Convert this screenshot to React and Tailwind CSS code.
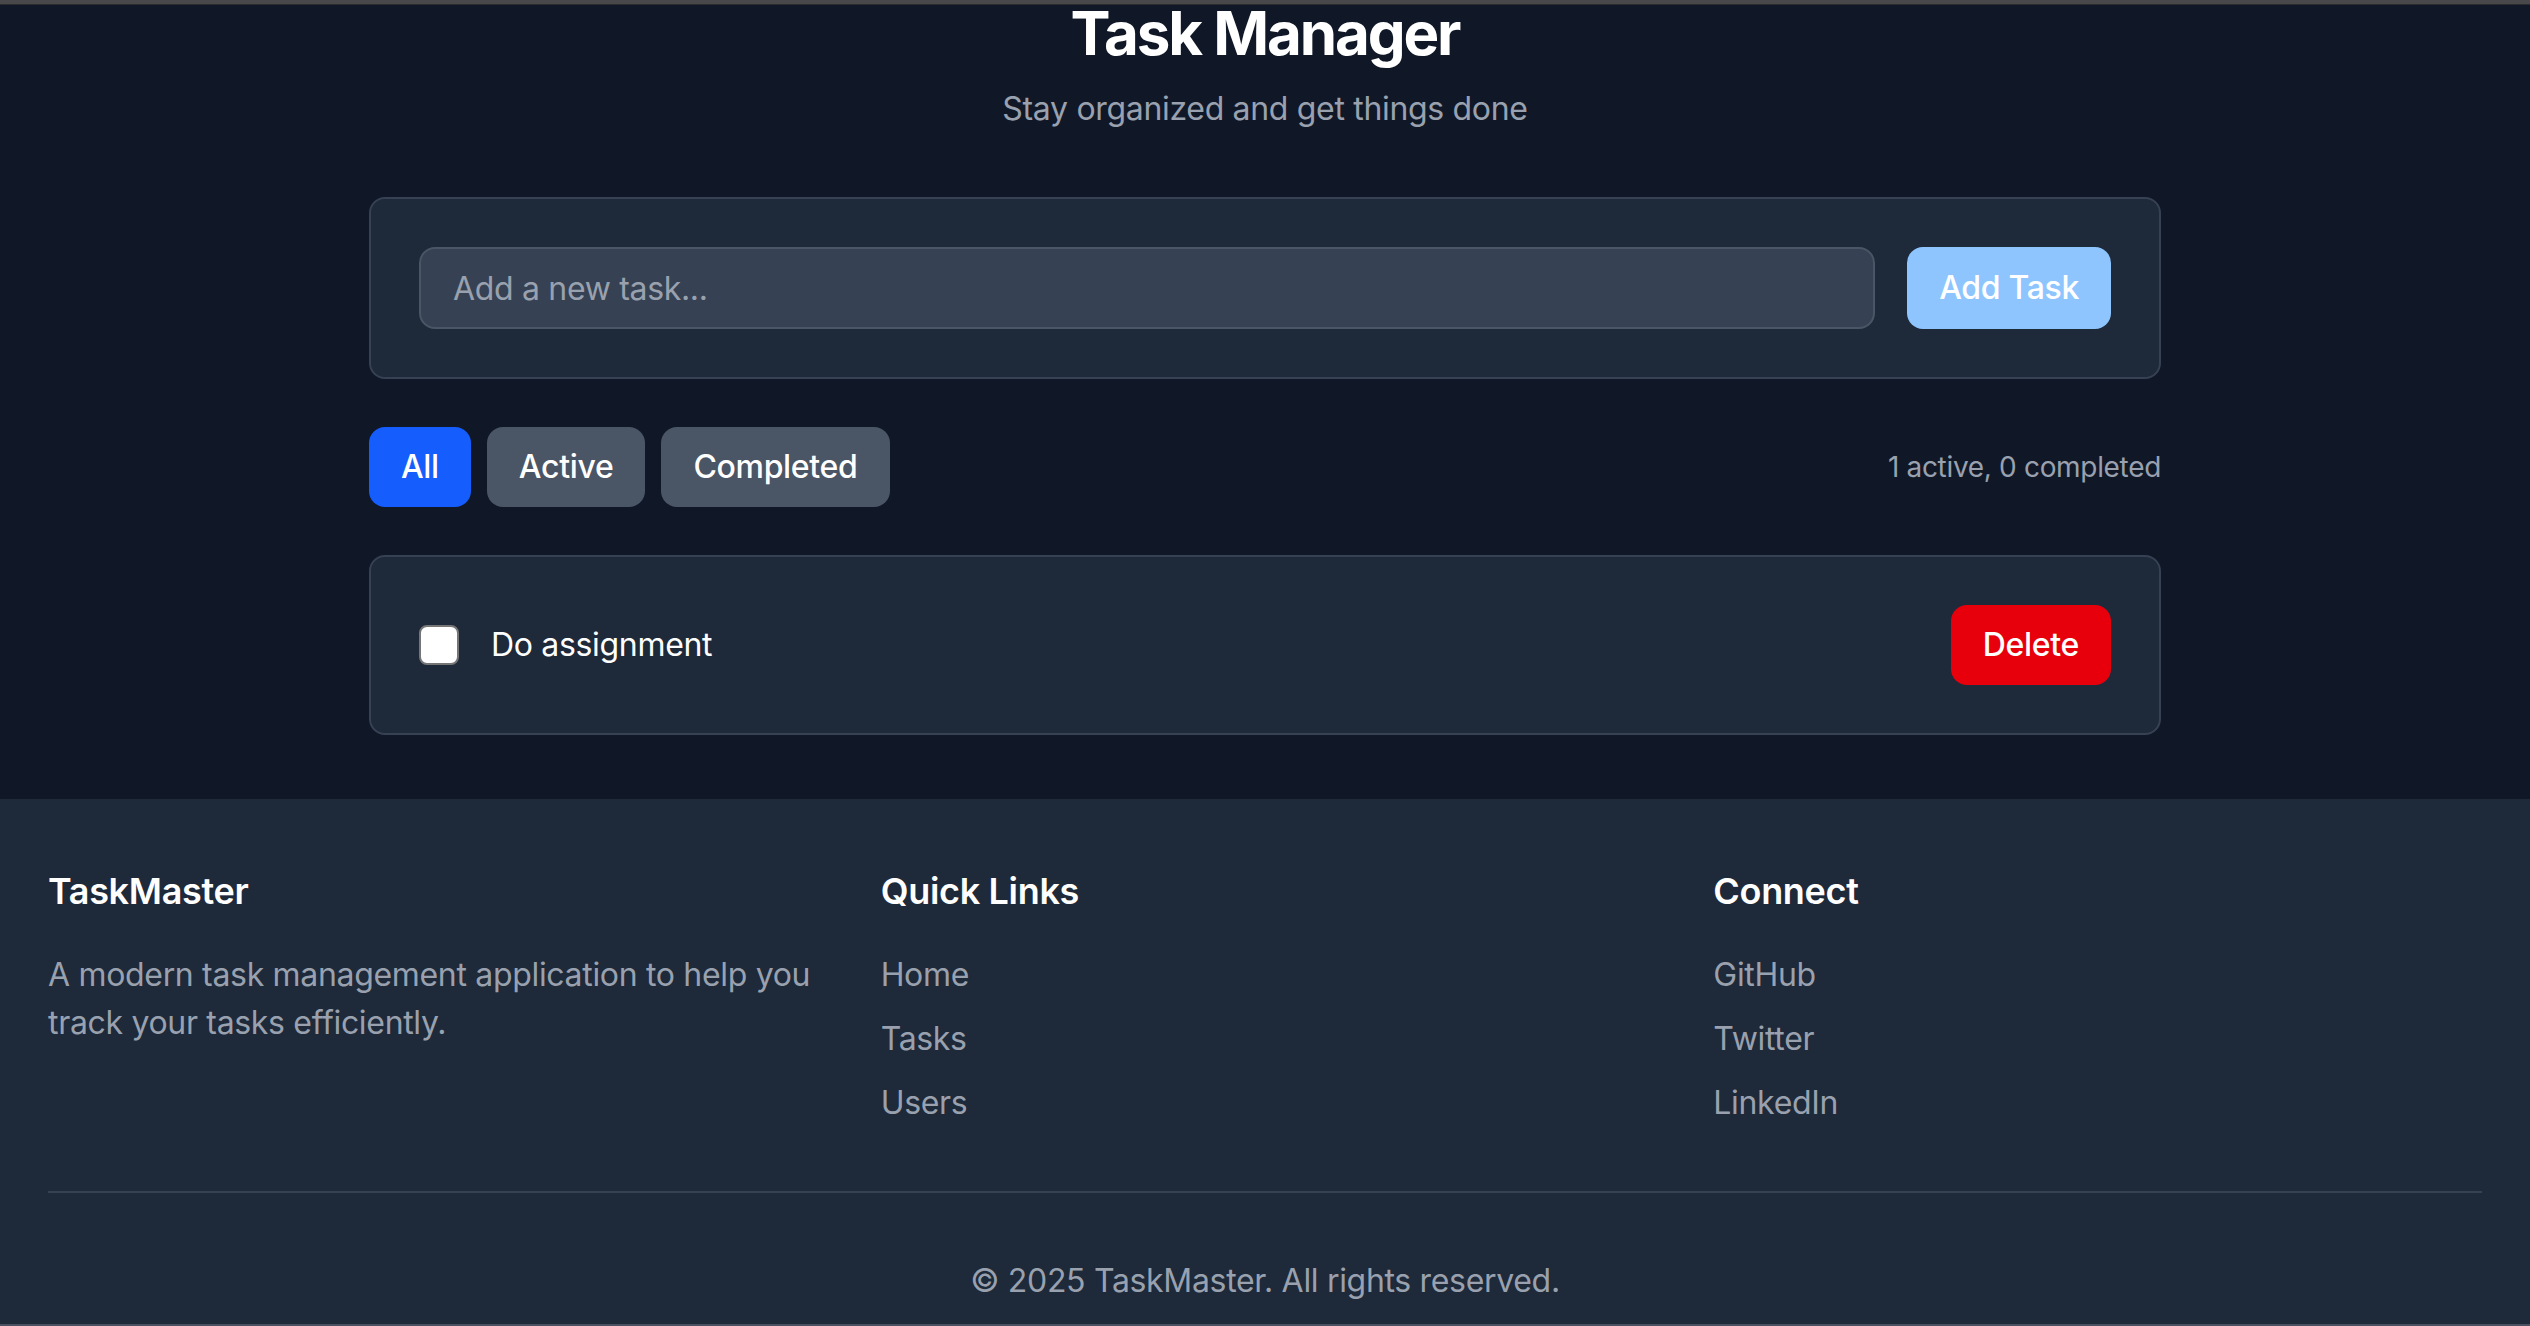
import { useState } from 'react';

export default function App() {
  const [task, setTask] = useState('');
  const [filter, setFilter] = useState('all');

  const filters = [
    { key: 'all', label: 'All' },
    { key: 'active', label: 'Active' },
    { key: 'completed', label: 'Completed' },
  ];

  return (
    <div className="h-[1326px] overflow-hidden flex flex-col bg-gray-900 tracking-[-0.02em]" style={{ fontFamily: 'Inter, "Noto Sans", sans-serif' }}>
      <div className="h-[5px] shrink-0 bg-[#48484a] border-b border-[#2c2c2e]"></div>

      <main className="w-full max-w-[1792px] mx-auto pb-16">
        <div className="text-center">
          <h1 className="text-[60px] leading-[56px] font-bold text-white tracking-[-0.035em]">Task Manager</h1>
          <p className="mt-6 text-[32px] leading-[48px] text-gray-400">Stay organized and get things done</p>
        </div>

        {/* add task */}
        <div className="mt-16 border-2 border-gray-700 bg-gray-800 rounded-2xl p-12 flex gap-8">
          <input
            type="text"
            placeholder="Add a new task..."
            value={task}
            onChange={(e) => setTask(e.target.value)}
            className="flex-1 h-[82px] px-8 rounded-2xl border-2 border-gray-600 bg-gray-700 text-[32px] text-white placeholder:text-gray-400 outline-none"
          />
          <button className="h-[82px] px-8 rounded-2xl bg-blue-300 text-white text-[32px] font-medium">Add Task</button>
        </div>

        {/* filters */}
        <div className="mt-12 flex items-center justify-between">
          <div className="flex gap-4">
            {filters.map((f) => (
              <button
                key={f.key}
                onClick={() => setFilter(f.key)}
                className={filter === f.key
                  ? 'h-[80px] px-8 rounded-2xl bg-blue-600 text-white text-[32px] font-medium'
                  : 'h-[80px] px-8 rounded-2xl bg-gray-600 text-white text-[32px] font-medium'}
              >
                {f.label}
              </button>
            ))}
          </div>
          <span className="text-[28px] text-gray-400">1 active, 0 completed</span>
        </div>

        {/* task list */}
        <div className="mt-12 border-2 border-gray-700 bg-gray-800 rounded-2xl p-12 flex items-center justify-between">
          <div className="flex items-center gap-8">
            <div className="w-10 h-10 bg-white rounded-lg border-2 border-[#767676]"></div>
            <span className="text-[32px] leading-[48px] text-white">Do assignment</span>
          </div>
          <button className="h-[80px] px-8 rounded-2xl bg-red-600 text-white text-[32px] font-medium">Delete</button>
        </div>
      </main>

      <footer className="flex-1 min-h-0 overflow-hidden bg-gray-800 px-12 pt-16">
        <div className="grid grid-cols-3 gap-16">
          <div>
            <h3 className="text-[36px] leading-[56px] font-semibold text-white mb-8">TaskMaster</h3>
            <p className="text-[32px] leading-[48px] text-gray-400">A modern task management application to help you track your tasks efficiently.</p>
          </div>
          <div>
            <h3 className="text-[36px] leading-[56px] font-semibold text-white mb-8">Quick Links</h3>
            <ul className="flex flex-col gap-4 text-[32px] leading-[48px] text-gray-400">
              <li>Home</li>
              <li>Tasks</li>
              <li>Users</li>
            </ul>
          </div>
          <div>
            <h3 className="text-[36px] leading-[56px] font-semibold text-white mb-8">Connect</h3>
            <ul className="flex flex-col gap-4 text-[32px] leading-[48px] text-gray-400">
              <li>GitHub</li>
              <li>Twitter</li>
              <li>LinkedIn</li>
            </ul>
          </div>
        </div>
        <div className="mt-16 border-t-2 border-gray-700 pt-16 text-center text-[32px] leading-[48px] text-gray-400">
          © 2025 TaskMaster. All rights reserved.
        </div>
      </footer>
      <div className="h-[2px] shrink-0 bg-[#4a5160]"></div>
    </div>
  );
}
